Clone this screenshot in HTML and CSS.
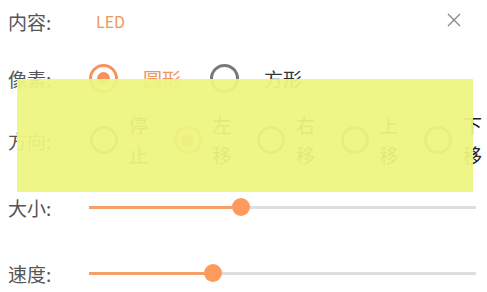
FILE: index.html
```html
<!DOCTYPE html>
<html lang="zh">
<head>
<meta charset="utf-8">
<link rel="stylesheet" href="styles.css">
</head>
<body>
<div class="panel">
  <div class="row r1">
    <span class="label">内容:</span>
    <span class="led">LED</span>
    <svg class="close" width="14" height="14" viewBox="0 0 14 14"><path d="M1 1 L13 13 M13 1 L1 13" stroke="#8a8a8a" stroke-width="1.4" fill="none"/></svg>
  </div>
  <div class="row r2">
    <span class="label">像素:</span>
    <div class="opts">
      <div class="opt"><span class="ring on"><span class="dot"></span></span><span class="txt on-txt">圆形</span></div>
      <div class="opt opt2"><span class="ring"></span><span class="txt">方形</span></div>
    </div>
  </div>
  <div class="row r3">
    <span class="label">方向:</span>
    <div class="dirs">
      <div class="dir"><span class="ring"></span><span class="vtxt">停止</span></div>
      <div class="dir"><span class="ring on"><span class="dot"></span></span><span class="vtxt on-txt">左移</span></div>
      <div class="dir"><span class="ring"></span><span class="vtxt">右移</span></div>
      <div class="dir"><span class="ring"></span><span class="vtxt">上移</span></div>
      <div class="dir"><span class="ring"></span><span class="vtxt">下移</span></div>
    </div>
  </div>
  <div class="row r4">
    <span class="label">大小:</span>
    <div class="slider">
      <div class="track"><div class="fill" style="width:39.3%"></div></div>
      <span class="thumb" style="left:39.3%"></span>
    </div>
  </div>
  <div class="row r5">
    <span class="label">速度:</span>
    <div class="slider">
      <div class="track"><div class="fill" style="width:32%"></div></div>
      <span class="thumb" style="left:32%"></span>
    </div>
  </div>
  <div class="overlay"></div>
</div>
</body>
</html>
```
FILE: styles.css
```css
html, body {
  margin: 0;
  padding: 0;
  background: #ffffff;
  overflow: hidden;
}
body {
  font-family: "Noto Sans CJK SC", "Noto Sans", sans-serif;
  width: 487px;
  height: 292px;
}
.panel {
  position: relative;
  padding: 0 11px 0 8px;
}
.row {
  display: flex;
  align-items: center;
}
.label {
  width: 81px;
  flex-shrink: 0;
  font-size: 19px;
  color: #555555;
  line-height: 1;
}
.r1 { height: 42px; }
.r2 { height: 40px; margin-top: 16px; }
.r3 { height: 64px; margin-top: 10px; }
.r4 { height: 30px; margin-top: 20px; }
.r5 { height: 30px; margin-top: 36px; }

.led {
  margin-left: 7px;
  font-size: 16px;
  color: #f0955b;
}
.close {
  margin-left: auto;
  margin-right: 15px;
  margin-top: -2px;
}
.opts {
  display: flex;
  align-items: center;
}
.opt {
  display: flex;
  align-items: center;
}
.opt2 { margin-left: 29px; }
.ring {
  width: 29px;
  height: 29px;
  box-sizing: border-box;
  border: 3px solid #777777;
  border-radius: 50%;
  display: flex;
  align-items: center;
  justify-content: center;
  flex-shrink: 0;
}
.ring.on { border-color: #f7935a; }
.dot {
  width: 13px;
  height: 13px;
  border-radius: 50%;
  background: #f7935a;
}
.txt {
  margin-left: 25px;
  font-size: 19px;
  color: #333333;
  line-height: 1;
}
.on-txt { color: #f0955b; }
.dirs {
  display: flex;
  flex-shrink: 0;
  margin-left: 1px;
}
.dir {
  width: 83.5px;
  flex-shrink: 0;
  display: flex;
  align-items: center;
}
.dir .ring { width: 28px; height: 28px; }
.vtxt {
  margin-left: 11px;
  width: 19px;
  font-size: 19px;
  line-height: 30px;
  color: #222222;
  word-break: break-all;
}
.slider {
  position: relative;
  flex: 1;
  height: 18px;
  display: flex;
  align-items: center;
}
.track {
  width: 100%;
  height: 3px;
  background: #dddddd;
}
.fill {
  height: 100%;
  background: #f5a06b;
}
.thumb {
  position: absolute;
  top: 0;
  width: 18px;
  height: 18px;
  margin-left: -9px;
  border-radius: 50%;
  background: #fd9a5c;
}
.overlay {
  position: absolute;
  left: 17px;
  top: 79px;
  width: 456px;
  height: 113px;
  background: rgba(237, 245, 128, 0.94);
}
```
